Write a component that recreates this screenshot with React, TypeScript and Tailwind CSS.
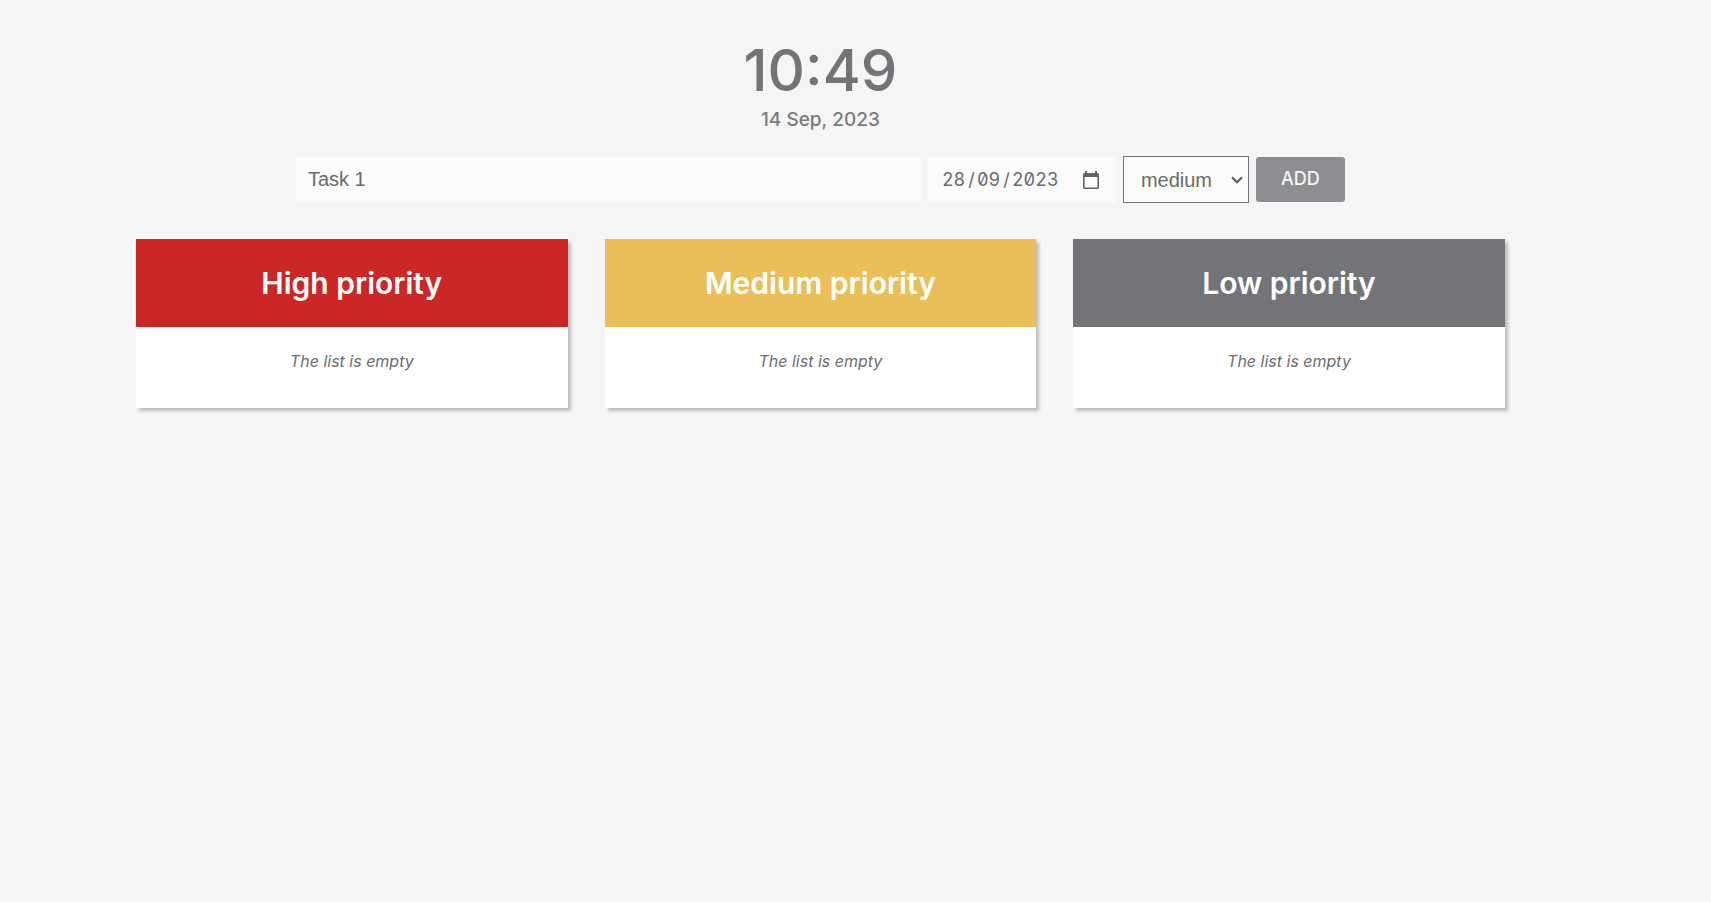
import { useState } from "react";

const lists = [
  { title: "High priority", color: "bg-[#cc2727]" },
  { title: "Medium priority", color: "bg-[#eabf59]" },
  { title: "Low priority", color: "bg-[#737478]" },
];

function CalendarIcon() {
  return (
    <svg viewBox="0 0 16 18" className="h-[18px] w-4" fill="currentColor" aria-hidden="true">
      <path
        fillRule="evenodd"
        d="M2 0h2v2h8V0h2v2h.5A1.5 1.5 0 0 1 16 3.5v13a1.5 1.5 0 0 1-1.5 1.5h-13A1.5 1.5 0 0 1 0 16.5v-13A1.5 1.5 0 0 1 1.5 2H2V0ZM1.6 6v10.4h12.8V6H1.6Z"
      />
    </svg>
  );
}

function ChevronIcon() {
  return (
    <svg
      viewBox="0 0 12 8"
      className="pointer-events-none col-start-1 row-start-1 mr-[6px] h-2 w-3 self-center justify-self-end"
      fill="none"
      stroke="#5f5f5f"
      strokeWidth="2.2"
      aria-hidden="true"
    >
      <path d="M1 1.2l5 5 5-5" />
    </svg>
  );
}

function DateField() {
  const [day, setDay] = useState("28");
  const [month, setMonth] = useState("09");
  const [year, setYear] = useState("2023");

  return (
    <div
      role="group"
      aria-label="Due date"
      className="flex h-[45px] w-[188px] shrink-0 items-center bg-[#fbfbfb] pr-[17px] pl-[14px] font-['Inter',sans-serif] text-lg slashed-zero tabular-nums"
    >
      <input
        type="text"
        aria-label="Day"
        maxLength={2}
        value={day}
        onChange={(e) => setDay(e.target.value)}
        className="w-6"
      />
      <span className="w-[11px] text-center">/</span>
      <input
        type="text"
        aria-label="Month"
        maxLength={2}
        value={month}
        onChange={(e) => setMonth(e.target.value)}
        className="w-6"
      />
      <span className="w-[11px] text-center">/</span>
      <input
        type="text"
        aria-label="Year"
        maxLength={4}
        value={year}
        onChange={(e) => setYear(e.target.value)}
        className="w-12"
      />
      <button type="button" aria-label="Open calendar" className="ml-auto text-[#636363]">
        <CalendarIcon />
      </button>
    </div>
  );
}

function TaskForm() {
  const [task, setTask] = useState("Task 1");
  const [priority, setPriority] = useState("medium");

  return (
    <form
      className="mt-[22px] flex items-center justify-center gap-[7px] font-['Liberation_Sans',sans-serif] text-xl text-[#6b6b6b]"
      onSubmit={(e) => e.preventDefault()}
    >
      <input
        type="text"
        aria-label="Task"
        value={task}
        onChange={(e) => setTask(e.target.value)}
        className="h-[45px] w-[625px] min-w-0 bg-[#fbfbfb] px-3"
      />
      <DateField />
      <div className="grid">
        <select
          aria-label="Priority"
          value={priority}
          onChange={(e) => setPriority(e.target.value)}
          className="col-start-1 row-start-1 h-[47px] w-[126px] appearance-none border border-[#737478] bg-[#fbfbfb] px-[17px]"
        >
          <option>high</option>
          <option>medium</option>
          <option>low</option>
        </select>
        <ChevronIcon />
      </div>
      <button
        type="submit"
        className="h-[45px] w-[89px] rounded-[3px] bg-[#8d8e92] pb-px font-['Inter',sans-serif] text-lg font-medium text-[#f5f5f5]"
      >
        ADD
      </button>
    </form>
  );
}

export default function App() {
  return (
    <div className="min-h-screen bg-[#f5f5f5] font-['Inter',sans-serif] text-[#737478]">
      <main className="ml-34 w-4/5 pt-10">
        <header className="text-center font-medium">
          <h1 className="text-[58px] leading-[60px]">10:49</h1>
          <p className="mt-[6px] text-[19px] leading-7 text-[#7b7b7b]">14 Sep, 2023</p>
        </header>
        <TaskForm />
        <div className="mt-9 grid grid-cols-3 gap-[37px]">
          {lists.map((list) => (
            <section key={list.title} className="bg-white shadow-[3px_3px_3px_#bdbebd]">
              <h2
                className={`${list.color} py-6 text-center text-[30px] leading-10 font-semibold text-white`}
              >
                {list.title}
              </h2>
              <p className="pt-6 pb-9 text-center text-base leading-[21px] text-[#6c6d70] italic">
                The list is empty
              </p>
            </section>
          ))}
        </div>
      </main>
    </div>
  );
}
